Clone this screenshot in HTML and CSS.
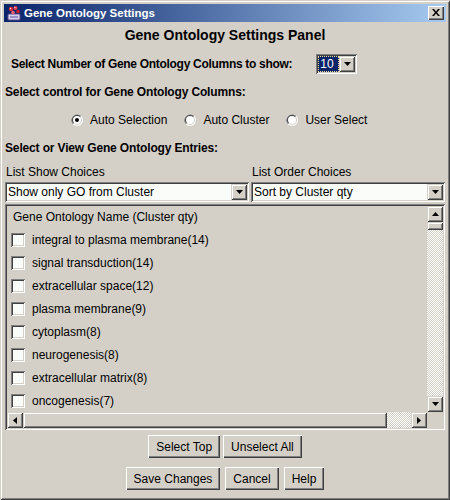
FILE: index.html
```html
<!DOCTYPE html>
<html>
<head>
<meta charset="utf-8">
<title>Gene Ontology Settings</title>
<link rel="stylesheet" href="styles.css">
</head>
<body>
<div class="window">
  <div class="titlebar">
    <svg class="appicon" width="16" height="16" viewBox="0 0 16 16">
      <rect x="2" y="9" width="12" height="6" rx="1" fill="#d8d0ec" stroke="#5a4a86"/>
      <rect x="4" y="11" width="8" height="2" fill="#9a8cc4"/>
      <circle cx="5" cy="4" r="2.2" fill="#e02434"/>
      <circle cx="9.5" cy="3" r="2" fill="#e84050"/>
      <circle cx="12" cy="6.5" r="1.8" fill="#d01828"/>
      <circle cx="7" cy="7.5" r="1.8" fill="#f06070"/>
      <circle cx="4.5" cy="3.5" r="0.7" fill="#fff"/>
      <circle cx="9" cy="2.5" r="0.6" fill="#fff"/>
    </svg>
    <span class="title">Gene Ontology Settings</span>
    <div class="closebtn">
      <svg width="8" height="7" viewBox="0 0 8 7"><path d="M0 0h2l2 2.5L6 0h2L5 3.5 8 7H6L4 4.5 2 7H0l3-3.5z" fill="#000"/></svg>
    </div>
  </div>
  <div class="content">
    <div class="panel-title">Gene Ontology Settings Panel</div>
    <div class="num-row">
      <span class="bold">Select Number of Gene Ontology Columns to show:</span>
      <div class="combo combo-small">
        <span class="combo-sel">10</span>
        <span class="arrow-btn"><svg width="7" height="4" viewBox="0 0 7 4"><path d="M0 0h7L3.5 4z" fill="#000"/></svg></span>
      </div>
    </div>
    <div class="section-label">Select control for Gene Ontology Columns:</div>
    <div class="radios">
      <label class="radio">
        <svg width="12" height="12" viewBox="0 0 12 12">
          <circle cx="6" cy="6" r="6" fill="#fff"/>
          <path d="M10.24 1.76A6 6 0 0 0 1.76 10.24Z" fill="#808080"/>
          <circle cx="6" cy="6" r="5" fill="#d4d0c8"/>
          <path d="M9.54 2.46A5 5 0 0 0 2.46 9.54Z" fill="#404040"/>
          <circle cx="6" cy="6" r="4" fill="#fff"/>
          <circle cx="6" cy="6" r="2" fill="#000"/>
        </svg>
        <span>Auto Selection</span>
      </label>
      <label class="radio">
        <svg width="12" height="12" viewBox="0 0 12 12">
          <circle cx="6" cy="6" r="6" fill="#fff"/>
          <path d="M10.24 1.76A6 6 0 0 0 1.76 10.24Z" fill="#808080"/>
          <circle cx="6" cy="6" r="5" fill="#d4d0c8"/>
          <path d="M9.54 2.46A5 5 0 0 0 2.46 9.54Z" fill="#404040"/>
          <circle cx="6" cy="6" r="4" fill="#fff"/>
        </svg>
        <span>Auto Cluster</span>
      </label>
      <label class="radio">
        <svg width="12" height="12" viewBox="0 0 12 12">
          <circle cx="6" cy="6" r="6" fill="#fff"/>
          <path d="M10.24 1.76A6 6 0 0 0 1.76 10.24Z" fill="#808080"/>
          <circle cx="6" cy="6" r="5" fill="#d4d0c8"/>
          <path d="M9.54 2.46A5 5 0 0 0 2.46 9.54Z" fill="#404040"/>
          <circle cx="6" cy="6" r="4" fill="#fff"/>
        </svg>
        <span>User Select</span>
      </label>
    </div>
    <div class="section-label">Select or View Gene Ontology Entries:</div>
    <div class="choices">
      <div class="choice-label">List Show Choices</div>
      <div class="choice-label">List Order Choices</div>
      <div class="combo">
        <span class="combo-text">Show only GO from Cluster</span>
        <span class="arrow-btn"><svg width="7" height="4" viewBox="0 0 7 4"><path d="M0 0h7L3.5 4z" fill="#000"/></svg></span>
      </div>
      <div class="combo">
        <span class="combo-text">Sort by Cluster qty</span>
        <span class="arrow-btn"><svg width="7" height="4" viewBox="0 0 7 4"><path d="M0 0h7L3.5 4z" fill="#000"/></svg></span>
      </div>
    </div>
    <div class="scrollpane">
      <div class="viewport">
        <div class="list-header">Gene Ontology Name (Cluster qty)</div>
        <div class="list-row"><span class="checkbox"></span><span>integral to plasma membrane(14)</span></div>
        <div class="list-row"><span class="checkbox"></span><span>signal transduction(14)</span></div>
        <div class="list-row"><span class="checkbox"></span><span>extracellular space(12)</span></div>
        <div class="list-row"><span class="checkbox"></span><span>plasma membrane(9)</span></div>
        <div class="list-row"><span class="checkbox"></span><span>cytoplasm(8)</span></div>
        <div class="list-row"><span class="checkbox"></span><span>neurogenesis(8)</span></div>
        <div class="list-row"><span class="checkbox"></span><span>extracellular matrix(8)</span></div>
        <div class="list-row"><span class="checkbox"></span><span>oncogenesis(7)</span></div>
      </div>
      <div class="vscroll">
        <span class="sb-btn"><svg width="7" height="4" viewBox="0 0 7 4"><path d="M0 4h7L3.5 0z" fill="#000"/></svg></span>
        <span class="vthumb"></span>
        <span class="track"></span>
        <span class="sb-btn"><svg width="7" height="4" viewBox="0 0 7 4"><path d="M0 0h7L3.5 4z" fill="#000"/></svg></span>
      </div>
      <div class="hscroll">
        <span class="sb-btn"><svg width="4" height="7" viewBox="0 0 4 7"><path d="M4 0v7L0 3.5z" fill="#000"/></svg></span>
        <span class="hthumb"></span>
        <span class="track"></span>
        <span class="sb-btn"><svg width="4" height="7" viewBox="0 0 4 7"><path d="M0 0v7L4 3.5z" fill="#000"/></svg></span>
      </div>
      <div class="corner"></div>
    </div>
    <div class="btn-row row-top">
      <button class="btn">Select Top</button>
      <button class="btn">Unselect All</button>
    </div>
    <div class="btn-row row-bottom">
      <button class="btn">Save Changes</button>
      <button class="btn">Cancel</button>
      <button class="btn">Help</button>
    </div>
  </div>
</div>
</body>
</html>
```

FILE: styles.css
```css
html, body {
  margin: 0;
  padding: 0;
  background: #d4d0c8;
}

body {
  font-family: "Liberation Sans", Arial, sans-serif;
  font-size: 12px;
  color: #000;
}

.window {
  width: 450px;
  height: 500px;
  box-sizing: border-box;
  padding: 4px;
  background: #d4d0c8;
  box-shadow: inset 1px 1px #d4d0c8, inset -1px -1px #404040, inset 2px 2px #ffffff, inset -2px -2px #808080;
  display: flex;
  flex-direction: column;
}

.titlebar {
  height: 18px;
  display: flex;
  align-items: center;
  padding: 0 2px;
  background: linear-gradient(to right, #0a246a, #a6caf0);
  color: #fff;
}

.appicon {
  display: block;
  margin-right: 2px;
}

.title {
  flex: 1;
  font-weight: bold;
  font-size: 11.5px;
  line-height: 18px;
}

.closebtn {
  width: 16px;
  height: 14px;
  background: #d4d0c8;
  box-shadow: inset 1px 1px #ffffff, inset -1px -1px #404040, inset -2px -2px #808080;
  display: flex;
  align-items: center;
  justify-content: center;
}

.closebtn svg {
  display: block;
  margin-top: -1px;
}

.content {
  flex: 1;
  padding: 0 1px;
  display: flex;
  flex-direction: column;
}

.panel-title {
  margin-top: 4px;
  text-align: center;
  font-weight: bold;
  font-size: 14px;
  line-height: 18px;
}

.bold {
  font-weight: bold;
  letter-spacing: -0.3px;
}

.num-row {
  margin-top: 10px;
  height: 20px;
  display: flex;
  align-items: center;
  padding-left: 6px;
  gap: 24px;
}

.section-label {
  margin-top: 10px;
  font-weight: bold;
  line-height: 16px;
  letter-spacing: -0.15px;
}

.radios {
  margin-top: 10px;
  height: 20px;
  display: flex;
  align-items: center;
  padding-left: 66px;
  gap: 17px;
}

.radio {
  display: flex;
  align-items: center;
  gap: 7px;
}

.radio svg {
  display: block;
}

.choices {
  margin-top: 8px;
  display: grid;
  grid-template-columns: 244px 1fr;
  column-gap: 2px;
}

.choice-label {
  line-height: 16px;
  padding-left: 1px;
}

.combo {
  margin-top: 2px;
  height: 20px;
  box-sizing: border-box;
  padding: 2px;
  background: #fafcfa;
  box-shadow: inset 1px 1px #808080, inset -1px -1px #ffffff, inset 2px 2px #404040, inset -2px -2px #d4d0c8;
  display: flex;
  align-items: center;
}

.combo-text {
  flex: 1;
  padding-left: 1px;
  line-height: 16px;
  white-space: nowrap;
}

.combo-small {
  margin-top: 0;
  width: 41px;
}

.combo-sel {
  width: 21px;
  height: 16px;
  box-sizing: border-box;
  background: #0a246a;
  color: #fff;
  border: 1px dotted #f0e08a;
  line-height: 14px;
  padding-left: 1px;
}

.arrow-btn,
.sb-btn {
  width: 16px;
  height: 16px;
  flex: none;
  background: #d4d0c8;
  box-shadow: inset 1px 1px #d4d0c8, inset -1px -1px #404040, inset 2px 2px #ffffff, inset -2px -2px #808080;
  display: flex;
  align-items: center;
  justify-content: center;
}

.arrow-btn {
  margin-left: auto;
}

.arrow-btn svg,
.sb-btn svg {
  display: block;
}

.scrollpane {
  margin-top: 2px;
  padding: 2px;
  box-shadow: inset 1px 1px #808080, inset -1px -1px #ffffff, inset 2px 2px #404040, inset -2px -2px #d4d0c8;
  display: grid;
  grid-template-columns: 1fr 16px;
  grid-template-rows: 206px 16px;
}

.viewport {
  overflow: hidden;
}

.list-header {
  height: 22px;
  line-height: 22px;
  padding-left: 6px;
  white-space: nowrap;
}

.list-row {
  height: 23px;
  display: flex;
  align-items: center;
  padding-left: 4px;
  gap: 7px;
  white-space: nowrap;
}

.checkbox {
  width: 14px;
  height: 14px;
  flex: none;
  background: #fafcfa;
  box-shadow: inset 1px 1px #808080, inset -1px -1px #ffffff, inset 2px 2px #404040, inset -2px -2px #d4d0c8;
}

.vscroll {
  display: flex;
  flex-direction: column;
}

.hscroll {
  display: flex;
}

.track {
  flex: 1;
  background: repeating-conic-gradient(#ffffff 0 25%, #d4d0c8 0 50%) 0 0 / 2px 2px;
}

.vthumb {
  height: 8px;
  flex: none;
  background: #d4d0c8;
  box-shadow: inset 1px 1px #d4d0c8, inset -1px -1px #404040, inset 2px 2px #ffffff, inset -2px -2px #808080;
}

.hthumb {
  width: 364px;
  flex: none;
  background: #d4d0c8;
  box-shadow: inset 1px 1px #d4d0c8, inset -1px -1px #404040, inset 2px 2px #ffffff, inset -2px -2px #808080;
}

.corner {
  background: #d4d0c8;
}

.btn-row {
  display: flex;
  justify-content: center;
}

.row-top {
  margin-top: 5px;
  gap: 3px;
}

.row-bottom {
  margin-top: 9px;
  gap: 5px;
}

.btn {
  height: 23px;
  padding: 0 8px;
  margin: 0;
  border: 0;
  border-radius: 0;
  background: #d4d0c8;
  box-shadow: inset 1px 1px #ffffff, inset -1px -1px #404040, inset -2px -2px #808080;
  font-family: "Liberation Sans", Arial, sans-serif;
  font-size: 12px;
  color: #000;
}
```
